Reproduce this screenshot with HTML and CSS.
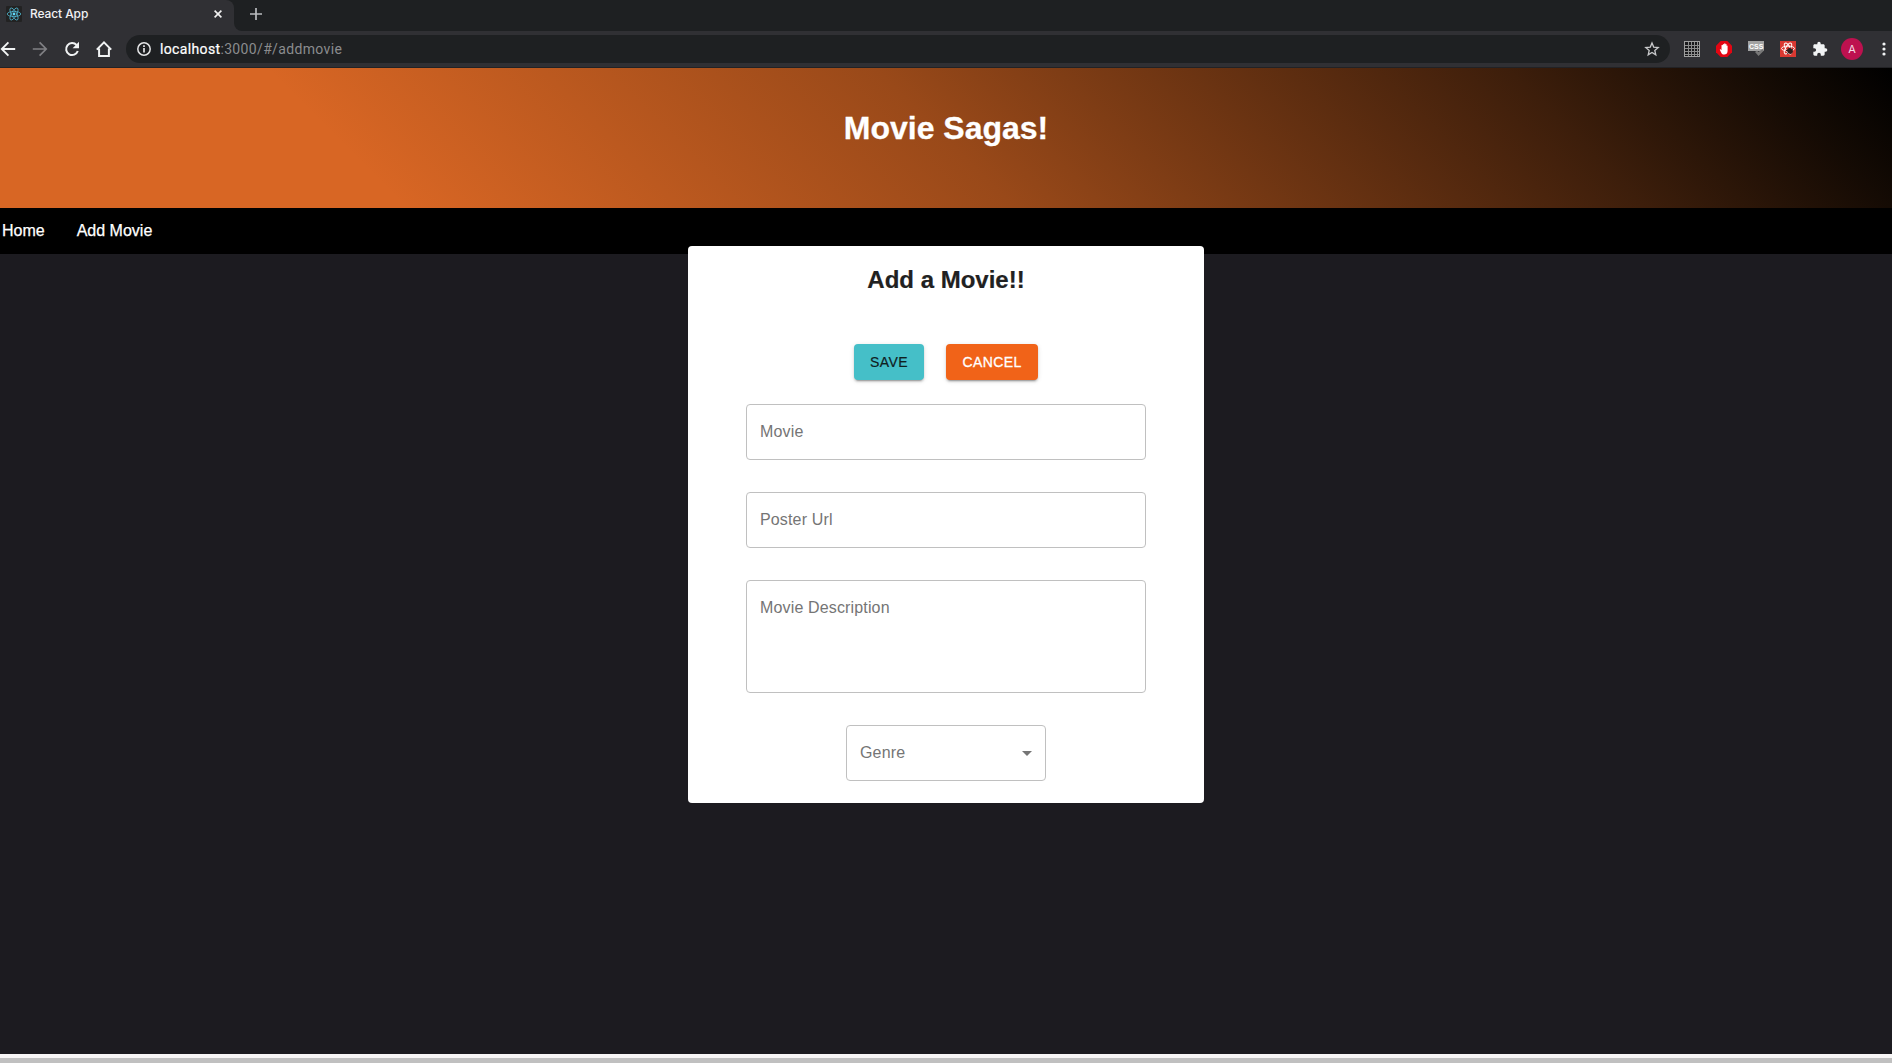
FILE: index.html
```html
<!DOCTYPE html>
<html lang="en">
<head>
<meta charset="utf-8">
<title>React App</title>
<link rel="stylesheet" href="styles.css">
</head>
<body>
<div class="tabstrip">
  <div class="tab">
    <svg class="favicon" width="16" height="16" viewBox="0 0 16 16"><rect width="16" height="16" rx="1" fill="#222"/><g fill="none" stroke="#4fb3cc" stroke-width=".8"><ellipse cx="8" cy="8" rx="6.8" ry="2.6"/><ellipse cx="8" cy="8" rx="6.8" ry="2.6" transform="rotate(60 8 8)"/><ellipse cx="8" cy="8" rx="6.8" ry="2.6" transform="rotate(120 8 8)"/></g><circle cx="8" cy="8" r="1.4" fill="#61dafb"/></svg>
    <span class="tab-title">React App</span>
    <svg class="close" width="8" height="8" viewBox="0 0 8 8"><path d="M.6.6l6.8 6.8M7.4.6L.6 7.4" stroke="#f1f1f1" stroke-width="1.6"/></svg>
  </div>
  <div class="strip-rest">
    <svg class="plus" width="12" height="12" viewBox="0 0 12 12"><path d="M6 0v12M0 6h12" stroke="#b9bbbe" stroke-width="1.7"/></svg>
  </div>
</div>
<div class="toolbar">
  <div class="nav-icons">
    <svg width="16" height="16" viewBox="0 0 16 16"><path d="M15.200 8H2.200M8.400 1.400L1.800 8l6.600 6.600" fill="none" stroke="#f1f3f4" stroke-width="1.9"/></svg>
    <svg width="16" height="16" viewBox="0 0 16 16"><path d="M.8 8h13M7.600 1.400L14.200 8l-6.600 6.600" fill="none" stroke="#808084" stroke-width="1.7"/></svg>
    <svg width="16" height="16" viewBox="0 0 16 16"><path d="M13.800 10A6 6 0 1 1 12.600 4" fill="none" stroke="#f1f3f4" stroke-width="2"/><path d="M15 .8v6.400H8.600z" fill="#f1f3f4"/></svg>
    <svg width="16" height="16" viewBox="0 0 16 16"><path d="M.8 8.600L8 1.400l7.200 7.200M3.100 7.400v7.500h9.800V7.400" fill="none" stroke="#f1f3f4" stroke-width="2"/></svg>
  </div>
  <div class="omnibox">
    <svg width="14" height="14" viewBox="0 0 14 14"><circle cx="7" cy="7" r="6.2" fill="none" stroke="#e4e5e6" stroke-width="1.5"/><path d="M7 6v4.600M7 3.200v1.700" stroke="#e4e5e6" stroke-width="1.7"/></svg>
    <span class="url"><b>localhost</b>:3000/#/addmovie</span>
    <svg class="star" width="16" height="16" viewBox="0 0 16 16"><path d="M8 2l1.700 4.100 4.500.4-3.400 2.900 1 4.400L8 11.500l-3.800 2.300 1-4.400-3.400-2.900 4.500-.4z" fill="none" stroke="#c9cacc" stroke-width="1.3"/></svg>
  </div>
  <div class="extensions">
    <svg width="16" height="16" viewBox="0 0 16 16" shape-rendering="crispEdges"><path d="M0 0h16v16H0z" fill="#a0a0a0"/><path d="M1 1h14v14H1z" fill="#1a1a1c"/><path d="M4 1h1v14H4zM7 1h1v14H7zM10 1h1v14h-1zM13 1h1v14h-1zM1 4h14v1H1zM1 7h14v1H1zM1 10h14v1H1zM1 13h14v1H1z" fill="#8d8d8d"/></svg>
    <svg width="16" height="16" viewBox="0 0 16 16"><path d="M4.700 0h6.600L16 4.700v6.600L11.300 16H4.700L0 11.300V4.700z" fill="#e30613"/><path d="M5.500 4.400v4.800l-.7-.8c-.5-.6-1.200-.1-.9.5l1.500 3c.6 1.200 1.400 1.700 2.700 1.700 2.100 0 3.500-1.300 3.500-3.600V4.900c0-.7-1-.7-1 0V3.600c0-.8-1.100-.8-1.100 0v-.8c0-.8-1.300-.8-1.300 0v.8c0-.8-1.200-.8-1.200 0v.8c0-.8-1.500-.8-1.500 0z" fill="#fff"/></svg>
    <svg width="16" height="16" viewBox="0 0 16 16"><path d="M0 0h16v10H0z" fill="#a3a3a3"/><path d="M7 11l2-1.500 1.500 1.500L14.500 8l1.500 1.500-5.500 5.500z" fill="#777"/><text x="8.200" y="8.200" text-anchor="middle" class="css-mark">CSS</text></svg>
    <svg width="16" height="16" viewBox="0 0 16 16"><path d="M0 0h16v16H0z" fill="#d93831"/><g fill="none" stroke="#fff" stroke-width="1"><ellipse cx="8" cy="7.500" rx="6.500" ry="2.400"/><ellipse cx="8" cy="7.500" rx="6" ry="2.300" transform="rotate(60 8 7.500)"/><ellipse cx="8" cy="7.500" rx="6" ry="2.300" transform="rotate(120 8 7.500)"/></g><ellipse cx="10" cy="10" rx="3" ry="2.500" transform="rotate(40 10 10)" fill="#321c1a"/><path d="M6 9.500l2.500 0M7 12.500l2-1M10.500 6.500l-.5 2M13 8.500l-2 1" stroke="#321c1a"/></svg>
    <svg width="16" height="16" viewBox="0 0 24 24"><path d="M20.500 11H19V7c0-1.100-.9-2-2-2h-4V3.500a2.500 2.500 0 0 0-5 0V5H4c-1.100 0-2 .9-2 2v3.800h1.500a2.700 2.700 0 0 1 0 5.400H2V20c0 1.100.9 2 2 2h3.800v-1.500a2.700 2.700 0 0 1 5.400 0V22H17c1.100 0 2-.9 2-2v-4h1.500a2.500 2.500 0 0 0 0-5z" fill="#f1f3f4"/></svg>
    <span class="avatar">A</span>
    <svg class="dots" width="4" height="16" viewBox="0 0 4 16"><g fill="#f1f3f4"><circle cx="2" cy="3" r="1.6"/><circle cx="2" cy="8" r="1.6"/><circle cx="2" cy="13" r="1.6"/></g></svg>
  </div>
</div>
<header class="hero"><h1>Movie Sagas!</h1></header>
<nav class="nav"><a>Home</a><a>Add Movie</a></nav>
<main class="page">
  <form class="card">
    <h2>Add a Movie!!</h2>
    <div class="actions"><button type="button" class="btn save">SAVE</button><button type="button" class="btn cancel">CANCEL</button></div>
    <div class="field">Movie</div>
    <div class="field">Poster Url</div>
    <div class="field tall">Movie Description</div>
    <div class="field select"><span>Genre</span><svg width="10" height="5" viewBox="0 0 10 5"><path d="M0 0h10L5 5z" fill="#757575"/></svg></div>
  </form>
</main>
<footer class="edge"></footer>
</body>
</html>
```
FILE: styles.css
```css
* { box-sizing: border-box; }
body {
  margin: 0;
  height: 1063px;
  overflow: hidden;
  display: flex;
  flex-direction: column;
  background: #1c1b20;
  font-family: "Liberation Sans", Arial, sans-serif;
}
svg { display: block; flex: none; }

.tabstrip { height: 31px; flex: none; display: flex; background: #303034; }
.tab {
  width: 234px;
  display: flex;
  align-items: center;
  padding: 0 12px 3px 6px;
  background: #303034;
  border-top-right-radius: 8px;
  box-shadow: 8px -8px 0 #1e2022;
}
.strip-rest { flex: 1; background: #1e2022; border-bottom-left-radius: 8px; }
.tab-title { margin-left: 8px; font: 500 12px/16px Inter, sans-serif; letter-spacing: -.1px; color: #f1f1f3; }
.close { margin-left: auto; }
.plus { margin: 8px 0 0 16px; }

.toolbar {
  height: 37px;
  flex: none;
  display: flex;
  align-items: center;
  padding-right: 6px;
  background: #303034;
  border-bottom: 1px solid #222225;
}
.nav-icons { width: 126px; display: flex; gap: 16px; }
.omnibox {
  width: 1544px;
  height: 28px;
  display: flex;
  align-items: center;
  padding: 0 10px 0 11px;
  border-radius: 14px;
  background: #1e2022;
}
.url { margin-left: 9px; font: 400 14px/20px Roboto, sans-serif; letter-spacing: .35px; color: #8b8c8e; }
.url b { font-weight: 400; color: #fff; -webkit-text-stroke: .2px #fff; }
.star { margin-left: auto; }
.extensions { margin-left: 14px; display: flex; align-items: center; gap: 16px; }
.css-mark { font: 700 7px "Liberation Sans", sans-serif; fill: #fff; }
.avatar {
  width: 22px;
  height: 22px;
  margin: 0 -3px;
  border-radius: 50%;
  background: #bd114f;
  color: #f4dbe5;
  text-align: center;
  font: 400 11px/23px Inter, sans-serif;
}
.dots { margin-left: 6px; }

.hero {
  height: 140px;
  flex: none;
  padding-top: 41px;
  background: linear-gradient(45deg, #d86624 20%, #994919 50%, #3d1e0b 81%, #150b04 93%, #000 100%);
  color: #fff;
  text-align: center;
}
h1 { margin: 0; font-size: 32px; line-height: 39px; letter-spacing: 0; -webkit-text-stroke: .3px #fff; }
.nav {
  height: 46px;
  flex: none;
  display: flex;
  gap: 32px;
  padding: 14px 2px;
  background: #000;
  color: #fff;
  font-size: 16px;
  line-height: 18px;
  -webkit-text-stroke: .25px #fff;
}

.page { flex: 1; display: flex; justify-content: center; align-items: flex-start; }
.card {
  width: 516px;
  height: 557px;
  margin-top: -8px;
  display: flex;
  flex-direction: column;
  align-items: center;
  border-radius: 4px;
  background: #fff;
}
h2 { margin: 20px 0 0; font-size: 24px; line-height: 28px; color: #212121; -webkit-text-stroke: .2px #212121; }
.actions { margin: 50px 0 24px; display: flex; gap: 22px; }
.btn {
  height: 36px;
  padding: 0;
  border: 0;
  border-radius: 4px;
  font: 400 14px/36px "Liberation Sans", Arial, sans-serif;
  letter-spacing: .4px;
  box-shadow: 0 3px 1px -2px rgba(0,0,0,.2), 0 2px 2px rgba(0,0,0,.14), 0 1px 5px rgba(0,0,0,.12);
}
.save { width: 70px; background: #45bfc8; color: #10201f; -webkit-text-stroke: .2px #10201f; }
.cancel { width: 92px; background: #f16318; color: #fff; -webkit-text-stroke: .3px #fff; }
.field {
  width: 400px;
  height: 56px;
  margin-bottom: 32px;
  padding: 17px 13px;
  border: 1px solid #c0c0c0;
  border-radius: 4px;
  color: #757575;
  font-size: 16px;
  line-height: 20px;
  letter-spacing: .15px;
}
.tall { height: 113px; }
.select { width: 200px; display: flex; align-items: center; justify-content: space-between; margin-bottom: 0; }

.edge { height: 9px; flex: none; background: #c0c0c0; border-top: 4px solid #f8f6f6; }
```
